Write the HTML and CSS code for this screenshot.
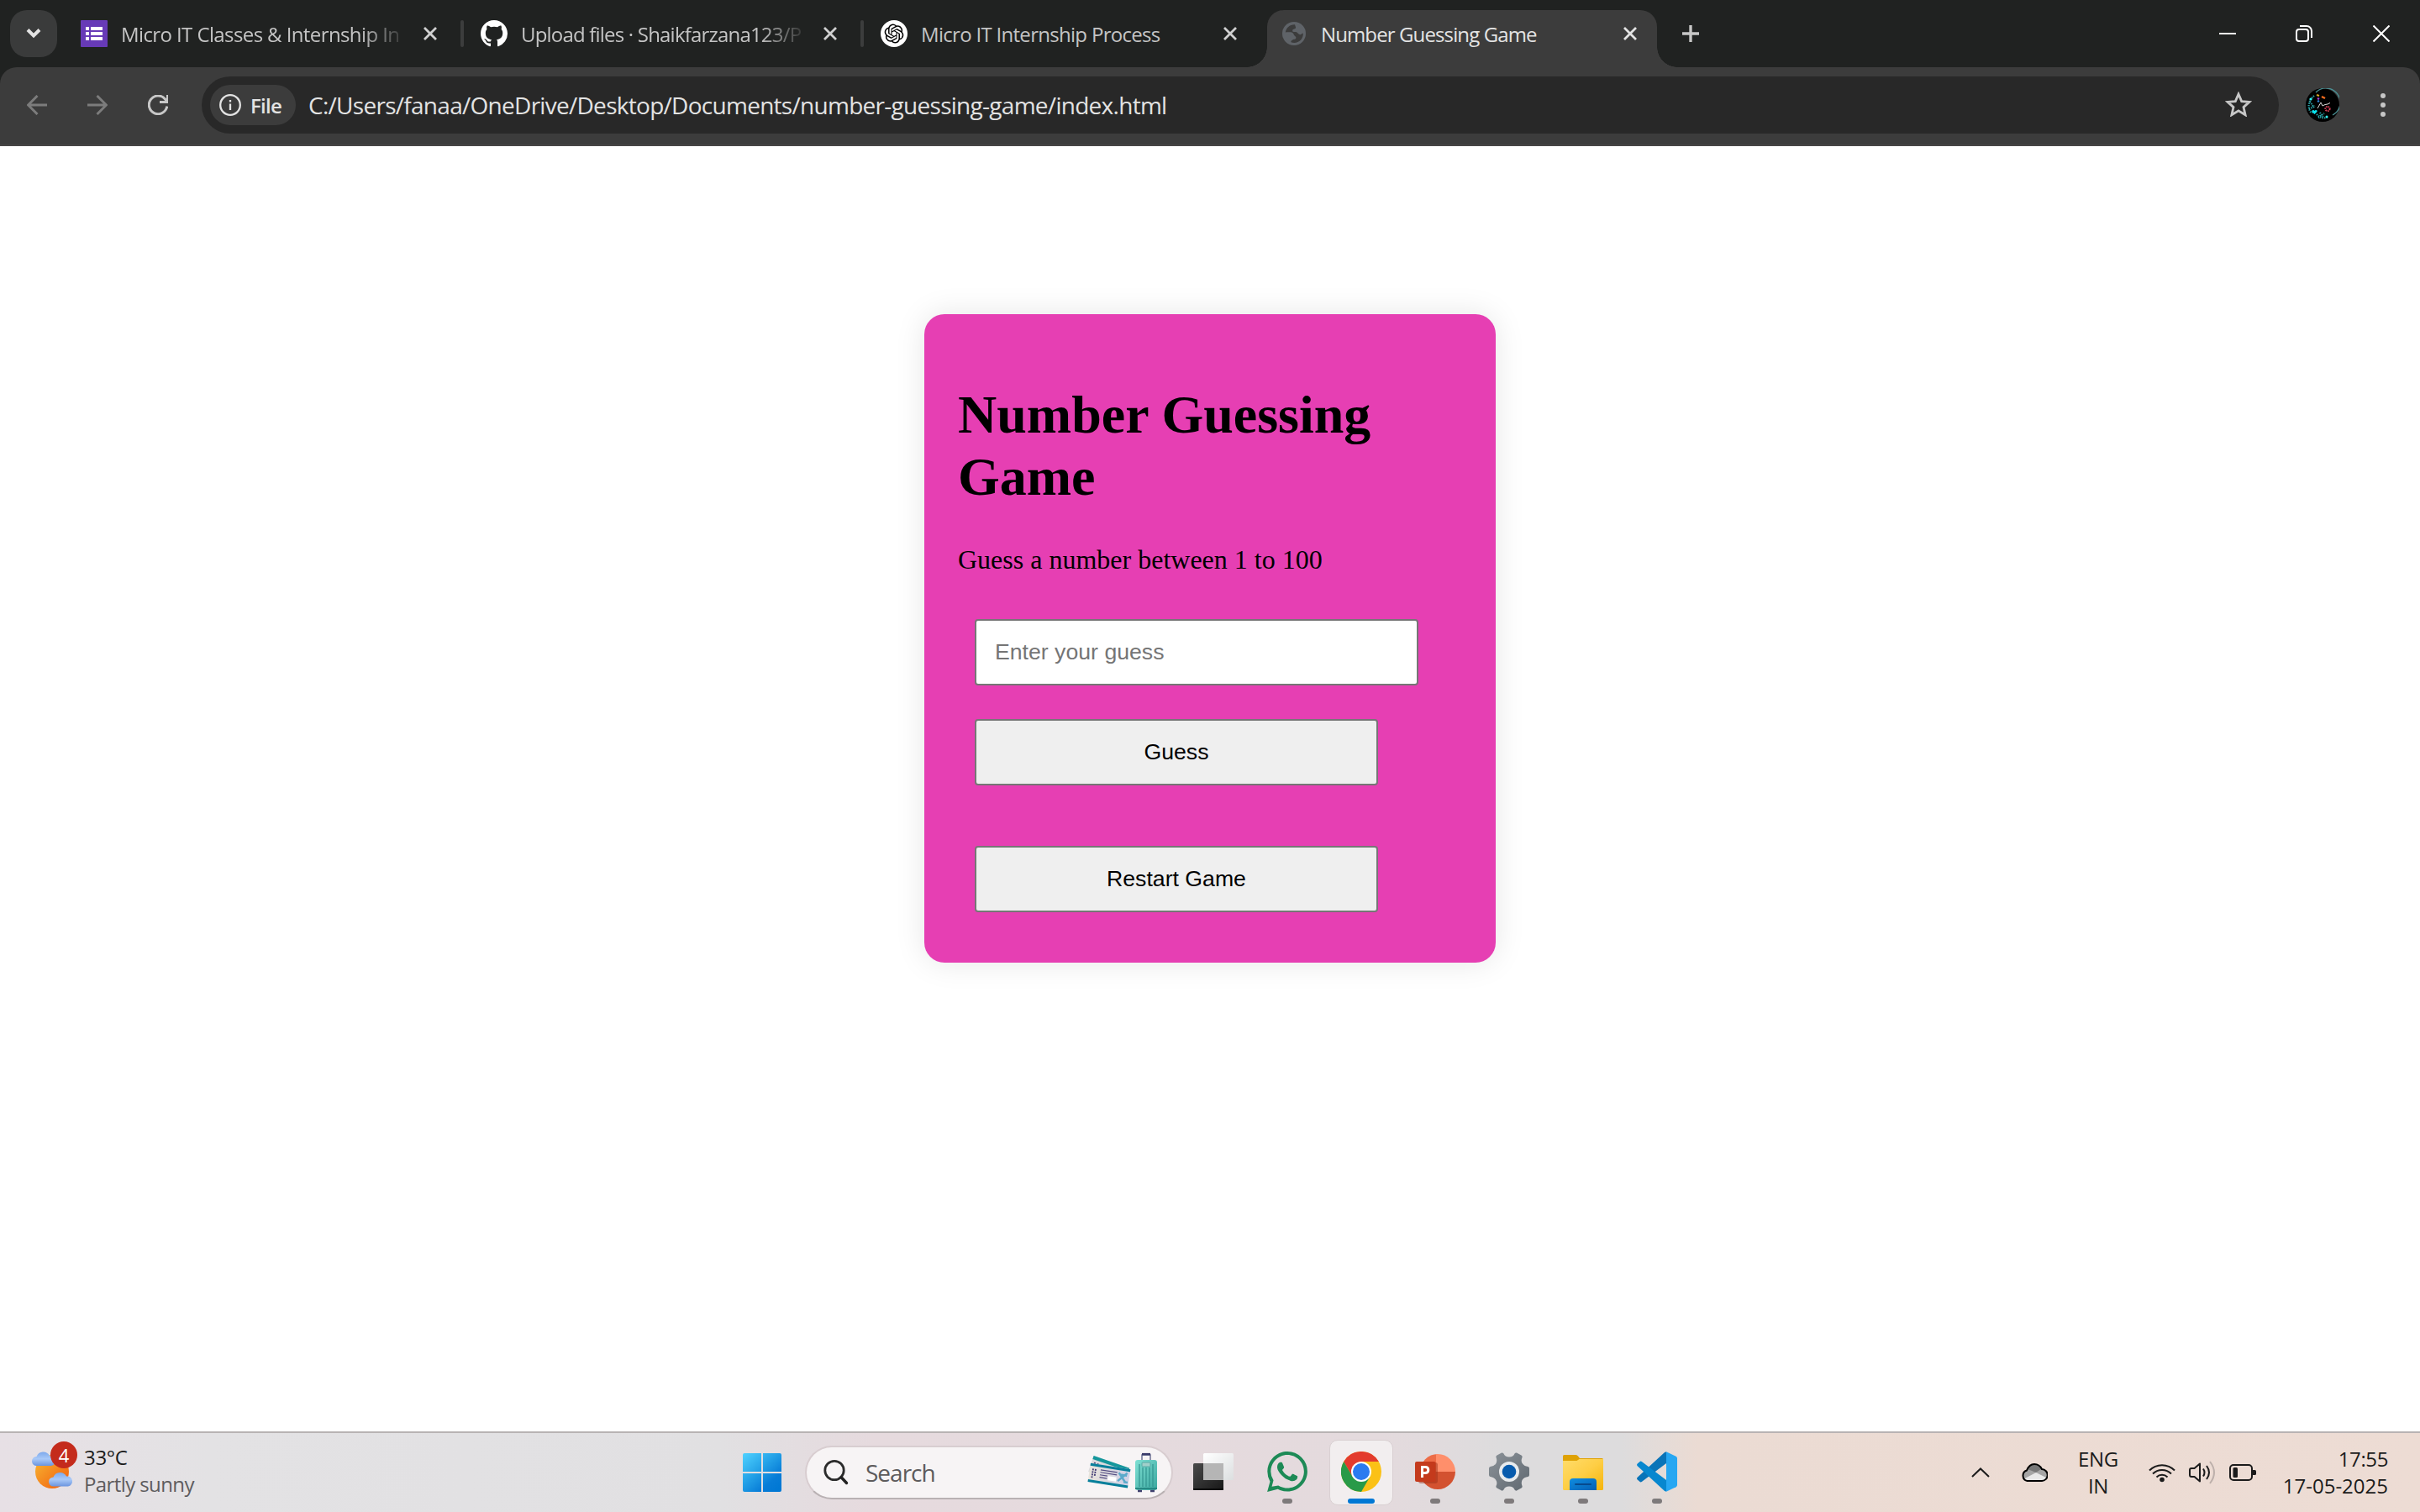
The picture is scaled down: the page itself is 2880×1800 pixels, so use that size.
FILE: index.html
```html
<!DOCTYPE html>
<html lang="en">
<head>
<meta charset="utf-8">
<title>Number Guessing Game</title>
<link rel="stylesheet" href="styles.css">
</head>
<body>
<div class="screen">
  <header class="tabstrip">
    <button class="tab-search" aria-label="Search tabs"><svg width="20" height="16" viewBox="0 0 20 16"><path d="M3 3.5l7 7 7-7" fill="none" stroke="#e3e3e3" stroke-width="4"/></svg></button>
    <div class="tab tab-first">
      <svg class="favicon" viewBox="0 0 32 32"><rect width="32" height="32" rx="1" fill="#673ab7"/><path d="M6 8h4v4H6zM12 8h14v4H12zM6 14h4v4H6zM12 14h14v4H12zM6 20h4v4H6zM12 20h14v4H12z" fill="#fff"/></svg>
      <span class="tab-title fade t1">Micro IT Classes &amp; Internship In</span>
      <svg class="tab-close" viewBox="0 0 16 16"><path d="M1 1l14 14M15 1L1 15"/></svg>
    </div>
    <i class="separator"></i>
    <div class="tab">
      <svg class="favicon" viewBox="0 0 16 16"><path fill="#fff" d="M8 0C3.58 0 0 3.58 0 8c0 3.54 2.29 6.53 5.47 7.59.4.07.55-.17.55-.38 0-.19-.01-.82-.01-1.49-2.01.37-2.53-.49-2.69-.94-.09-.23-.48-.94-.82-1.13-.28-.15-.68-.52-.01-.53.63-.01 1.08.58 1.23.82.72 1.21 1.87.87 2.33.66.07-.52.28-.87.51-1.07-1.78-.2-3.64-.89-3.64-3.95 0-.87.31-1.59.82-2.15-.08-.2-.36-1.02.08-2.12 0 0 .67-.21 2.2.82a7.6 7.6 0 014 0c1.53-1.04 2.2-.82 2.2-.82.44 1.1.16 1.92.08 2.12.51.56.82 1.27.82 2.15 0 3.07-1.87 3.75-3.65 3.95.29.25.54.73.54 1.48 0 1.07-.01 1.93-.01 2.2 0 .21.15.46.55.38A8.01 8.01 0 0016 8c0-4.42-3.58-8-8-8z"/></svg>
      <span class="tab-title fade t2">Upload files · Shaikfarzana123/P</span>
      <svg class="tab-close" viewBox="0 0 16 16"><path d="M1 1l14 14M15 1L1 15"/></svg>
    </div>
    <i class="separator"></i>
    <div class="tab">
      <svg class="favicon" viewBox="0 0 32 32"><circle cx="16" cy="16" r="16" fill="#fff"/><path transform="translate(4.600 4.600) scale(.95)" fill="#000" d="M22.2819 9.8211a5.9847 5.9847 0 0 0-.5157-4.9108 6.0462 6.0462 0 0 0-6.5098-2.9A6.0651 6.0651 0 0 0 4.9807 4.1818a5.9847 5.9847 0 0 0-3.9977 2.9 6.0462 6.0462 0 0 0 .7427 7.0966 5.98 5.98 0 0 0 .511 4.9107 6.051 6.051 0 0 0 6.5146 2.9001A5.9847 5.9847 0 0 0 13.2599 24a6.0557 6.0557 0 0 0 5.7718-4.2058 5.9894 5.9894 0 0 0 3.9977-2.9001 6.0557 6.0557 0 0 0-.7475-7.0729zm-9.022 12.6081a4.4755 4.4755 0 0 1-2.8764-1.0408l.1419-.0804 4.7783-2.7582a.7948.7948 0 0 0 .3927-.6813v-6.7369l2.02 1.1686a.071.071 0 0 1 .038.052v5.5826a4.504 4.504 0 0 1-4.4945 4.4944zm-9.6607-4.1254a4.4708 4.4708 0 0 1-.5346-3.0137l.142.0852 4.783 2.7582a.7712.7712 0 0 0 .7806 0l5.8428-3.3685v2.3324a.0804.0804 0 0 1-.0332.0615L9.74 19.9502a4.4992 4.4992 0 0 1-6.1408-1.6464zM2.3408 7.8956a4.485 4.485 0 0 1 2.3655-1.9728V11.6a.7664.7664 0 0 0 .3879.6765l5.8144 3.3543-2.0201 1.1685a.0757.0757 0 0 1-.071 0l-4.8303-2.7865A4.504 4.504 0 0 1 2.3408 7.872zm16.5963 3.8558L13.1038 8.364 15.1192 7.2a.0757.0757 0 0 1 .071 0l4.8303 2.7913a4.4944 4.4944 0 0 1-.6765 8.1042v-5.6772a.79.79 0 0 0-.407-.667zm2.0107-3.0231l-.142-.0852-4.7735-2.7818a.7759.7759 0 0 0-.7854 0L9.409 9.2297V6.8974a.0662.0662 0 0 1 .0284-.0615l4.8303-2.7866a4.4992 4.4992 0 0 1 6.6802 4.66zM8.3065 12.863l-2.02-1.1638a.0804.0804 0 0 1-.038-.0567V6.0742a4.4992 4.4992 0 0 1 7.3757-3.4537l-.142.0805L8.704 5.459a.7948.7948 0 0 0-.3927.6813zm1.0976-2.3654l2.602-1.4998 2.6069 1.4998v2.9994l-2.5974 1.4997-2.6067-1.4997Z"/></svg>
      <span class="tab-title t3">Micro IT Internship Process</span>
      <svg class="tab-close" viewBox="0 0 16 16"><path d="M1 1l14 14M15 1L1 15"/></svg>
    </div>
    <div class="tab active">
      <svg class="globe" viewBox="0 0 28 28"><circle cx="14" cy="14" r="14" fill="#5f6368"/><path fill="#3c3c3c" d="M15 3.2c-5.800-.3-10.600 4-11.200 9.300 2.700-.2 6.800-.3 8.300.5 2 1 1.500 3.300 3.300 4.300 1.200.7 1.400 2.500.1 3.200-1.700.4-5 .8-5.200 3.800 7.500 2.800 15-2.600 14.500-10.700-2.200.6-2.400 2.300-4.300 1.500-2-.8-2.500-3.200-5.200-3-2.200.1-3.300-.5-3.100-1.700.4-2.700 3.700-1.500 3.900-3.700z"/></svg>
      <span class="tab-title t4">Number Guessing Game</span>
      <svg class="tab-close" viewBox="0 0 16 16"><path d="M1 1l14 14M15 1L1 15"/></svg>
    </div>
    <svg class="new-tab" viewBox="0 0 20 20"><path d="M10 0v20M0 10h20" stroke="#c7c7c7" stroke-width="3.4"/></svg>
    <div class="window-controls">
      <svg viewBox="0 0 20 20"><path d="M0 10h20"/></svg>
      <svg viewBox="0 0 20 20"><rect x="1" y="5" width="14" height="14" rx="3"/><path d="M5 1h8a6 6 0 0 1 6 6v8"/></svg>
      <svg viewBox="0 0 20 20"><path d="M.5.5l19 19M19.500.5l-19 19"/></svg>
    </div>
  </header>

  <div class="toolbar-bed">
  <nav class="toolbar">
    <svg class="nav-icon dim" viewBox="0 0 24 24"><path d="M24 12H2M12.500 1L1.500 12l11 11"/></svg>
    <svg class="nav-icon dim" viewBox="0 0 24 24"><path d="M0 12h22M11.500 1l11 11-11 11"/></svg>
    <svg class="nav-icon" viewBox="0 0 24 24"><path d="M22.800 13.500A10.800 10.800 0 1 1 20.500 5L22.500 8M23.500 0v8.500H14"/></svg>
    <div class="omnibox">
      <div class="chip">
        <svg width="26" height="26" viewBox="0 0 26 26"><circle cx="13" cy="13" r="11.800" fill="none" stroke="#e3e3e3" stroke-width="2.300"/><path d="M13 11.500v7.500M13 7v2.400" stroke="#e3e3e3" stroke-width="2.300"/></svg>
        <span>File</span>
      </div>
      <span class="url">C:/Users/fanaa/OneDrive/Desktop/Documents/number-guessing-game/index.html</span>
      <svg class="star" viewBox="0 0 32 30"><path d="M16 3l3.700 8.600 9.300.8-7 6.200 2.100 9.200-8.100-4.900-8.100 4.900 2.100-9.200-7-6.200 9.300-.8z" fill="none" stroke="#c7c7c7" stroke-width="2.800"/></svg>
    </div>
    <svg class="avatar" viewBox="0 0 40 40"><circle cx="20" cy="20" r="20" fill="#000"/><path d="M12 5a17 17 0 1 1 20 27" fill="none" stroke="#4a8f93" stroke-width="1.300"/><g fill="none" stroke="#2aa3a8" stroke-width="2.200" stroke-dasharray="1.300 1.300"><path d="M10 9Q2 16 4 24t6 3M5 16l5 7M4 25l7-4M13 31q7 7 13 3M15 35l7-5M17 29l4 6"/></g><path d="M10.500 31l-3-3c-.6-2 2-3 3-1 1-2 4-1 3 1z" fill="#08e4ee"/><circle cx="6" cy="13" r="1.600" fill="#3ff"/><circle cx="25" cy="34" r="1.500" fill="#3ff"/><path d="M14 24l4-7 2 4 3-1.500 3-.5 3-1.500" fill="none" stroke="#ddd"/><path d="M13 8l3 1" stroke="#d9a621" stroke-width="2"/><path d="M19 10l4 2" stroke="#f26b1d" stroke-width="2.500"/><path d="M14 12l2 1" stroke="#a43cdc" stroke-width="2.500"/><path d="M14 16l2-1" stroke="#2d82d8" stroke-width="2.500"/><circle cx="26" cy="24.500" r="2.600" fill="none" stroke="#e4405b" stroke-width="2" stroke-dasharray="1.500 1"/></svg>
    <svg class="menu-dots" viewBox="0 0 6 28"><circle cx="3" cy="3" r="3"/><circle cx="3" cy="14" r="3"/><circle cx="3" cy="25" r="3"/></svg>
  </nav>
  </div>

  <main class="page">
    <section class="card">
      <h1>Number Guessing Game</h1>
      <p>Guess a number between 1 to 100</p>
      <input type="text" placeholder="Enter your guess">
      <button class="guess">Guess</button>
      <button class="restart">Restart Game</button>
    </section>
  </main>

  <footer class="taskbar">
    <div class="weather">
      <div class="weather-icon">
        <svg width="52" height="48" viewBox="0 0 52 48"><defs><linearGradient id="sun" x1="0" y1="0" x2="1" y2="1"><stop offset=".2" stop-color="#f6a62c"/><stop offset="1" stop-color="#f25b0c"/></linearGradient><linearGradient id="cl" x1="0" y1="0" x2="0" y2="1"><stop offset="0" stop-color="#7da9ec"/><stop offset=".5" stop-color="#a9c9f8"/><stop offset="1" stop-color="#6b95df"/></linearGradient></defs><circle cx="24" cy="26" r="20" fill="url(#sun)"/><path id="cloud" d="M5.500 19a5.500 5.500 0 0 1 0-11A8.500 8.500 0 0 1 21 7a6 6 0 0 1 2 12z" fill="url(#cl)"/><use href="#cloud" x="20" y="24.500"/></svg>
        <b class="badge">4</b>
      </div>
      <div class="weather-text"><span class="temp">33°C</span><span class="cond">Partly sunny</span></div>
    </div>

    <svg class="start" viewBox="0 0 46 46"><defs><linearGradient id="win" gradientUnits="userSpaceOnUse" x1="0" y1="0" x2="40" y2="44"><stop offset="0" stop-color="#4fd2ff"/><stop offset=".45" stop-color="#25a3e8"/><stop offset=".8" stop-color="#077cd7"/><stop offset="1" stop-color="#0078d4"/></linearGradient></defs><path fill="url(#win)" d="M2 0h20v22H0V2a2 2 0 0 1 2-2zM24 0h20a2 2 0 0 1 2 2v20H24zM0 24h22v22H2a2 2 0 0 1-2-2zM24 24h22v20a2 2 0 0 1-2 2H24z"/></svg>
    <div class="search">
      <svg width="30" height="32" viewBox="0 0 30 32"><circle cx="13" cy="13.500" r="11.200" fill="none" stroke="#2b2b2b" stroke-width="2.800"/><path d="M21 21.500l6.500 7" stroke="#222" stroke-width="3.400" stroke-linecap="round"/></svg>
      <span>Search</span>
      <svg class="trip" width="84" height="48" viewBox="0 0 84 48"><defs><linearGradient id="bag" x1="0" y1="0" x2="1" y2="1"><stop offset="0" stop-color="#7fe0d4"/><stop offset="1" stop-color="#3ba79f"/></linearGradient><linearGradient id="tk" x1="0" y1="0" x2="1" y2="0"><stop offset="0" stop-color="#e8e4dc"/><stop offset="1" stop-color="#cfd0e6"/></linearGradient></defs><g transform="rotate(19 8 6)"><rect x="8" y="4" width="45" height="20" fill="#d9d9dd"/><path d="M8 4h45v4H8z" fill="#15979c"/><path d="M12 11v7M16 11v7" stroke="#4a4470" stroke-width="2" stroke-dasharray="2 1"/></g><g transform="rotate(9 6 13)"><rect x="5" y="13" width="48" height="22" fill="url(#tk)"/><path d="M5 13h48v3H5zM5 32.500h48v3H5z" fill="#087f9b"/><path d="M9 19v11M12 19v9" stroke="#413b75" stroke-width="1.800" stroke-dasharray="2 1"/><path d="M18 19h20M18 22h20M18 25h9M18 28h9" stroke="#554e83" stroke-width="1.200"/><path d="M28 25h10v5H28z" fill="#fff"/><path d="M40 19l9 10M50 18l-10 11M42 21h8M47 29h5" stroke="#5baacb" stroke-width="2.500"/></g><path d="M66 11V3h10v8" fill="none" stroke="#777c9c" stroke-width="1.600"/><path d="M66 2.200h10" stroke="#393a6a" stroke-width="2.600"/><rect x="58" y="9" width="26" height="36" rx="3" fill="url(#bag)"/><path d="M63 14v27M67 18v23M71 18v23M75 18v23M79 14v27" stroke="#329490" stroke-width="1.200"/><rect x="66" y="12" width="10" height="5" rx="1" fill="#a0d0cb" stroke="#58aaa6"/><path d="M58 43h26" stroke="#268883" stroke-width="2"/><path d="M61 46h5M76 46h5" stroke="#40406e" stroke-width="2.500"/></svg>
    </div>

    <div class="apps">
      <div class="app idle"><svg viewBox="0 0 48 48"><defs><linearGradient id="tv" x1="0" y1="0" x2="1" y2="1"><stop offset="0" stop-color="#4a4a4a"/><stop offset="1" stop-color="#171717"/></linearGradient><linearGradient id="tl" x1="0" y1="0" x2="1" y2="1"><stop offset="0" stop-color="#fff"/><stop offset="1" stop-color="#dcdfe0"/></linearGradient></defs><rect y="14" width="36" height="32" rx="1.500" fill="url(#tv)"/><path d="M0 44h36v1a1 1 0 0 1-1 1H1a1 1 0 0 1-1-1z" fill="#090909"/><rect x="12" y="2" width="36" height="32" rx="1.500" fill="url(#tl)"/><path d="M12 14h24v20H12z" fill="#b5b5b5"/></svg></div>
      <div class="app"><svg viewBox="0 0 24 24"><path fill="#1d8a56" d="M.057 24l1.687-6.163a11.867 11.867 0 0 1-1.587-5.946C.16 5.335 5.495 0 12.050 0a11.817 11.817 0 0 1 8.413 3.488 11.824 11.824 0 0 1 3.480 8.414c-.003 6.557-5.338 11.892-11.893 11.892a11.900 11.900 0 0 1-5.688-1.448L.057 24zm6.597-3.807c1.676.995 3.276 1.591 5.392 1.592 5.448 0 9.886-4.434 9.889-9.885.002-5.462-4.415-9.890-9.881-9.892-5.452 0-9.887 4.434-9.889 9.884a9.830 9.830 0 0 0 1.599 5.291l-.999 3.648 3.889-.638zm11.387-5.464c-.074-.124-.272-.198-.57-.347-.297-.149-1.758-.868-2.031-.967-.272-.099-.470-.149-.669.149-.198.297-.768.967-.941 1.165-.173.198-.347.223-.644.074-.297-.149-1.255-.462-2.390-1.475-.883-.788-1.480-1.761-1.653-2.059-.173-.297-.018-.458.130-.606.134-.133.297-.347.446-.521.151-.172.200-.296.300-.495.099-.198.050-.372-.025-.521-.075-.148-.669-1.611-.916-2.206-.242-.579-.487-.501-.669-.510l-.570-.010c-.198 0-.520.074-.792.372s-1.040 1.016-1.040 2.479 1.065 2.876 1.213 3.074c.149.198 2.095 3.200 5.076 4.487.709.306 1.263.489 1.694.626.712.226 1.360.194 1.872.118.571-.085 1.758-.719 2.006-1.413.248-.695.248-1.290.173-1.414z"/></svg><i></i></div>
      <div class="app current"><svg viewBox="-24 -24 48 48"><circle r="24" fill="#fbc116"/><path fill="#e33b2e" d="M-20.800-12A24 24 0 0 1 20.800-12H0L-10.400 6z"/><path fill="#289a48" d="M-20.800-12A24 24 0 0 0 0 24L10.400 6H-10.400z"/><circle r="12" fill="#fff"/><circle r="10" fill="#2a7bf0"/></svg><i></i></div>
      <div class="app"><svg viewBox="0 0 48 48"><path d="M27 3a21 21 0 0 0-21 21h21z" fill="#ed6c47"/><path d="M27 3a21 21 0 0 1 21 21H25V3z" fill="#ff8f6b"/><path d="M6 24h42a21 21 0 0 1-42 0z" fill="#d35230"/><rect x="4" y="13" width="23" height="25" rx="3" fill="#9e3018" opacity=".5"/><rect y="12" width="24.500" height="24" rx="2" fill="#c43a1c"/><path d="M8.500 31V18.500h3.700q3.600 0 3.600 3.500t-3.800 3.500H8.500" fill="none" stroke="#fff" stroke-width="3"/></svg><i></i></div>
      <div class="app"><svg viewBox="-24 -24 48 48"><defs><linearGradient id="gr" x1="0" y1="0" x2="1" y2="1"><stop offset="0" stop-color="#8b9298"/><stop offset="1" stop-color="#5f6870"/></linearGradient></defs><path fill="url(#gr)" d="M-14.500-19.500l5.500-3q1.500-.5 2.500 1Q-5-17.500 0-17.500T6.500-21.500q1-1.500 2.500-1l5.500 3q1.500 1 1 2.500-2 4.500.5 7.500 2 3 6.500 3.500 1.500.5 1.500 2V4q0 1.500-1.500 2-5 .5-7 4-1.500 3.500 0 7 .5 1.500-1 2.500L9 22.500q-1.500.5-2.500-1Q5 17.500 0 17.500T-6.500 21.500q-1 1.500-2.500 1l-5.500-3q-1.500-1-1-2.500 2-4-.5-7.500-2-3-6.500-3.500-1.500-.5-1.500-2V-4q0-1.500 1.500-2 5-.5 7-4 1.500-3.500 0-7-.5-1.500 1-2.500z"/><circle r="12" fill="#e8ebed"/><circle r="8.300" fill="#075bad"/></svg><i></i></div>
      <div class="app"><svg viewBox="0 0 48 48"><defs><linearGradient id="fo" x1="0" y1="0" x2="1" y2="1"><stop offset="0" stop-color="#ffdc6a"/><stop offset=".5" stop-color="#fece45"/><stop offset="1" stop-color="#f5b40b"/></linearGradient><linearGradient id="fb" x1="0" y1="0" x2="1" y2="1"><stop offset="0" stop-color="#0f8de0"/><stop offset="1" stop-color="#0560b4"/></linearGradient></defs><path d="M0 14V5.500A1.500 1.500 0 0 1 1.500 4h14q1.500 0 2.500 1.500L20 8h26.500A1.500 1.500 0 0 1 48 9.500V14z" fill="#dfa204"/><path d="M0 11h16.500l3-2H48v35.500a1.500 1.500 0 0 1-1.500 1.500h-45A1.500 1.500 0 0 1 0 44.500z" fill="url(#fo)"/><path d="M8 46V36q0-4 4-4h24q4 0 4 4v10z" fill="url(#fb)"/><path d="M15 39h18" stroke="#064a8d" stroke-width="2" stroke-linecap="round"/></svg><i></i></div>
      <div class="app"><svg viewBox="0 0 48 48"><path fill="#0a74b8" d="M35 .2V14L5.800 36q-1.300.9-2.500-.2L.7 33.500q-1.300-1.300 0-2.800L33 1.100z"/><path fill="#0787cf" d="M35 47.800V34L5.800 12q-1.300-.9-2.500.2L.7 14.500q-1.300 1.300 0 2.800L33 46.900z"/><path fill="#27a7f2" d="M35 .2l11.500 5.500Q48 6.500 48 8v32q0 1.500-1.500 2.300L35 47.800z"/></svg><i></i></div>
    </div>

    <div class="tray">
      <svg class="up" viewBox="0 0 22 12"><path d="M1 11L11 1.500 21 11" fill="none" stroke="#1b1b1b" stroke-width="2"/></svg>
      <svg class="onedrive" viewBox="0 0 32 22"><path d="M7.500 21a6.500 6.500 0 0 1-.5-12.500Q10 1 16 1t9 6a7 7 0 0 1-.5 14z" fill="#a5a5a5"/><path d="M8 7q3-6 8-6t8 6l-6 4z" fill="#777"/><path d="M3 19l15-8 12 6q-1 4-5.500 4h-17z" fill="#e8e8e8"/><path d="M7.500 21a6.500 6.500 0 0 1-.5-12.500Q10 1 16 1t9 6a7 7 0 0 1-.5 14z" fill="none" stroke="#000" stroke-width="2"/></svg>
      <div class="lang"><span>ENG</span><span>IN</span></div>
      <svg class="wifi" viewBox="0 0 32 24"><g fill="none" stroke="#1b1b1b" stroke-width="2"><path d="M1 9.500a21 21 0 0 1 30 0M5 13.500a15.500 15.500 0 0 1 22 0M9.500 17.500a9.200 9.200 0 0 1 13 0"/></g><circle cx="16" cy="20.500" r="2.800" fill="#1b1b1b"/></svg>
      <svg class="sound" viewBox="0 0 32 28"><g fill="none" stroke="#1b1b1b" stroke-width="2" stroke-linejoin="round"><path d="M13 3.500v21L6.500 19H3q-2 0-2-2v-6q0-2 2-2h3.500zM17 9.500q3 4.500 0 9M21 6q6 8 0 16"/></g><path d="M25 1q10 13 0 26" fill="none" stroke="#bdb0ab" stroke-width="2"/></svg>
      <svg class="battery" viewBox="0 0 32 20"><rect x="1" y="1" width="26" height="18" rx="4" fill="none" stroke="#1b1b1b" stroke-width="2"/><rect x="4.500" y="4" width="5.500" height="12" rx="1.500" fill="#1b1b1b"/><path d="M28 7h2.500q1.500 0 1.500 1.500v3q0 1.500-1.500 1.500H28z" fill="#1b1b1b"/></svg>
      <div class="clock"><span class="time">17:55</span><span class="date">17-05-2025</span></div>
    </div>
  </footer>
</div>
</body>
</html>
```
FILE: styles.css
```css
* { box-sizing: border-box; }
body { margin: 0; font-family: "Open Sans", "Noto Sans", sans-serif; }
svg { display: block; flex: none; }
button, input { margin: 0; }

.screen { width: 2880px; height: 1800px; display: flex; flex-direction: column; overflow: hidden; background: #fff; }

.tabstrip { height: 80px; background: #202221; display: flex; align-items: center; flex: none; }
.tab-search { width: 56px; height: 56px; margin-left: 12px; padding: 0; border: 0; border-radius: 20px; background: #3a3b3b; display: grid; place-items: center; }
.tab { display: flex; align-items: center; height: 80px; padding: 0 28px 0 20px; width: 472px; color: #c4c4c4; flex: none; }
.tab-first { width: 480px; padding-left: 28px; }
.favicon { width: 32px; height: 32px; flex: none; }
.tab-title { margin-left: 16px; width: 340px; font-size: 24px; line-height: 32px; white-space: nowrap; padding-top: 2px; letter-spacing: -.7px; }
.tab-close { margin-left: auto; }
.t1 { letter-spacing: -.6px; }
.t2 { letter-spacing: -.8px; }
.t4 { letter-spacing: -.88px; }
.fade { -webkit-mask-image: linear-gradient(90deg, #000 285px, transparent 342px); mask-image: linear-gradient(90deg, #000 285px, transparent 342px); }
.tab-close { width: 16px; height: 16px; fill: none; stroke: #d0d0d0; stroke-width: 2.8; }
.separator { width: 4px; height: 32px; border-radius: 2px; background: #3c3d3d; flex: none; }
.tab.active { position: relative; width: 464px; height: 68px; margin: 12px 0 0 8px; padding: 0 24px 12px 18px; border-radius: 20px 20px 0 0; background: #3c3c3c; color: #e3e3e3; }
.tab.active::before, .tab.active::after { content: ""; position: absolute; bottom: 0; width: 24px; height: 24px; }
.tab.active::before { left: -24px; background: radial-gradient(circle at 0 0, transparent 23.5px, #3c3c3c 24px); }
.tab.active::after { right: -24px; background: radial-gradient(circle at 100% 0, transparent 23.5px, #3c3c3c 24px); }
.tab.active .tab-close { stroke: #e3e3e3; }
.globe { width: 28px; height: 28px; }
.active .tab-title { margin-left: 18px; }
.new-tab { width: 20px; height: 20px; margin-left: 30px; }
.window-controls { margin-left: auto; margin-right: 36px; display: flex; gap: 72px; }
.window-controls svg { width: 20px; height: 20px; fill: none; stroke: #fff; stroke-width: 2; }
.window-controls svg:first-child { margin-right: -1px; }

.toolbar-bed { background: #202221; flex: none; }
.toolbar { height: 94px; padding: 0 41px 2px 32px; background: #3c3c3c; border-bottom: 2px solid #474545; border-radius: 20px 20px 0 0; display: flex; align-items: center; }
.nav-icon { width: 24px; height: 24px; margin-right: 48px; fill: none; stroke: #c7c7c7; stroke-width: 3; }
.nav-icon.dim { stroke: #7c7c7c; }
.nav-icon + .omnibox { margin-left: -8px; }
.omnibox { width: 2472px; height: 68px; padding: 0 32px 0 10px; border-radius: 34px; background: #282828; display: flex; align-items: center; }
.chip { width: 102px; height: 48px; padding-left: 11px; border-radius: 24px; background: #3c3c3c; display: flex; align-items: center; gap: 11px; font-size: 24px; font-weight: 600; letter-spacing: -.7px; color: #e3e3e3; }
.url { margin-left: 15px; font-size: 28px; letter-spacing: -.72px; color: #e3e3e3; white-space: nowrap; }
.star { width: 32px; height: 30px; margin-left: auto; margin-bottom: 2px; }
.avatar { width: 40px; height: 40px; margin-left: 32px; }
.menu-dots { width: 6px; height: 28px; margin-left: auto; fill: #c7c7c7; }

.page { flex: 1; display: flex; justify-content: center; align-items: flex-start; padding-top: 200px; }
.card { width: 680px; height: 772px; padding: 83px 40px 0; border-radius: 24px; background: #e63fb3; box-shadow: 0 0 36px rgba(0,0,0,.1); font-family: "Liberation Serif", serif; color: #000; display: flex; flex-direction: column; align-items: flex-start; }
h1 { margin: 0; font-size: 64px; line-height: 74px; }
p { margin: 43px 0 0; font-size: 32px; line-height: 36px; }
.card input, .card button { font: 26.667px "Liberation Sans", sans-serif; border: 2px solid #767676; border-radius: 4px; margin-left: 20px; height: 79px; }
.card input { width: 528px; margin-top: 53px; padding: 0 22px; background: #fff; }
.card input::placeholder { color: #757575; }
.card button { width: 480px; padding: 0; background: #efefef; color: #000; }
.card .guess { margin-top: 40px; }
.card .restart { margin-top: 72px; }

.taskbar { height: 96px; flex: none; border-top: 2px solid #b8b3b3; display: flex; align-items: center; background: linear-gradient(90deg, #e7e0e5 0, #e3e2e4 250px, #e1e0e2 860px, #e6dade 1040px, #e4dadd 1640px, #dddcdd 1790px, #dddcdd 1930px, #ebdbd3 2020px, #eddcd4 100%); }
.weather { display: flex; width: 846px; margin-left: 38px; height: 94px; padding-top: 20px; }
.weather-icon { position: relative; width: 52px; }
.badge { position: absolute; left: 22px; top: -10px; width: 32px; height: 32px; border-radius: 50%; background: #c42b1c; color: #fff; font-size: 22px; font-weight: 400; line-height: 32px; text-align: center; }
.weather-text { display: flex; flex-direction: column; margin: -7px 0 0 10px; font-size: 24px; line-height: 32px; white-space: nowrap; }
.temp { color: #1b1b1b; letter-spacing: -.3px; }
.cond { color: #5e5c5e; letter-spacing: -.6px; }
.start { width: 46px; height: 46px; }
.search { width: 438px; height: 64px; margin-left: 28px; padding: 0 17px 0 20px; border: 2px solid #d8cdd0; border-bottom-color: #b9b1b3; border-radius: 32px; background: #f7f4f5; display: flex; align-items: center; font-size: 28px; color: #5d5b5c; }
.search span { margin-left: 20px; letter-spacing: -1px; }
.trip { margin-left: auto; }
.apps { display: flex; margin-left: 4px; }
.app { width: 76px; height: 78px; margin: 0 6px; display: flex; flex-direction: column; align-items: center; padding-top: 13px; border: 1px solid transparent; border-radius: 10px; }
.app svg { width: 48px; height: 48px; }
.app i { width: 12px; height: 6px; margin-top: 8px; border-radius: 3px; background: #7e7a7b; }
.app.current { background: #f2eeef; border-color: #d9d0d2; }
.app.current i { width: 32px; background: #0078d4; }
.tray { flex: 1; display: flex; align-items: center; color: #1b1b1b; font-size: 24px; line-height: 32px; }
.tray span { display: block; }
.up { width: 22px; height: 12px; margin-left: 330px; }
.onedrive { width: 32px; height: 22px; margin-left: 37px; }
.lang { margin-left: 36px; width: 48px; text-align: center; letter-spacing: -.3px; }
.wifi { width: 32px; height: 24px; margin-left: 36px; }
.sound { width: 32px; height: 28px; margin-left: 16px; }
.battery { width: 32px; height: 20px; margin-left: 16px; }
.clock { margin-left: auto; margin-right: 38px; text-align: right; }
.time { letter-spacing: -.4px; }
```
